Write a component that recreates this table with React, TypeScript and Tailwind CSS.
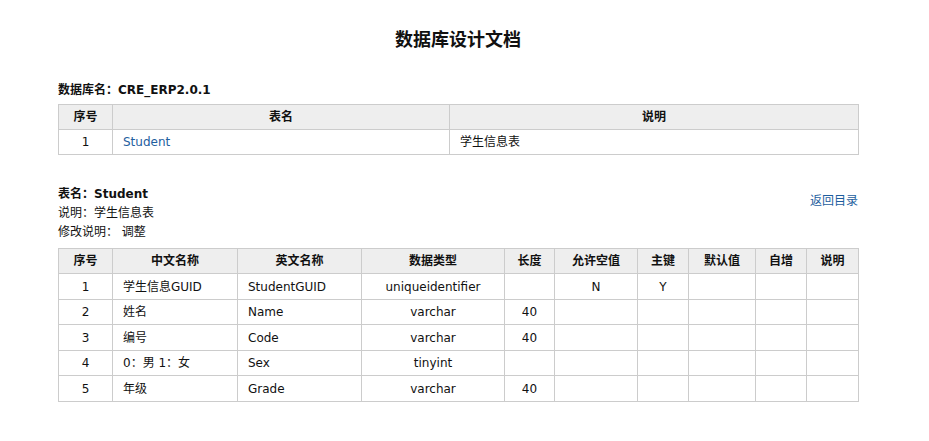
const font = "font-['Verdana','DejaVu_Sans','Noto_Sans_CJK_SC',sans-serif]";

type Column = { label: string; width: number; align: "center" | "left" };

const columns: Column[] = [
  { label: "序号", width: 54, align: "center" },
  { label: "中文名称", width: 125, align: "left" },
  { label: "英文名称", width: 124, align: "left" },
  { label: "数据类型", width: 143, align: "center" },
  { label: "长度", width: 50, align: "center" },
  { label: "允许空值", width: 83, align: "center" },
  { label: "主键", width: 51, align: "center" },
  { label: "默认值", width: 67, align: "center" },
  { label: "自增", width: 51, align: "center" },
  { label: "说明", width: 52, align: "center" },
];

const fields = [
  ["1", "学生信息GUID", "StudentGUID", "uniqueidentifier", "", "N", "Y", "", "", ""],
  ["2", "姓名", "Name", "varchar", "40", "", "", "", "", ""],
  ["3", "编号", "Code", "varchar", "40", "", "", "", "", ""],
  ["4", "0：男 1：女", "Sex", "tinyint", "", "", "", "", "", ""],
  ["5", "年级", "Grade", "varchar", "40", "", "", "", "", ""],
];

const th = "h-[25px] border border-[#cccccc] bg-[#eeeeee] font-bold text-center p-0";
const td = "h-[25px] border border-[#cccccc] px-[10px] py-0";

export default function App() {
  return (
    <div className={`w-[800px] ml-[58px] text-[12px] text-[#111111] ${font}`}>
      <h1 className="pt-[28px] text-center text-[18px] leading-[24px] font-bold">数据库设计文档</h1>

      <div className="mt-[30px] leading-[16px] font-bold">数据库名：CRE_ERP2.0.1</div>
      <table className="mt-[6px] w-[800px] table-fixed border-collapse">
        <colgroup>
          <col className="w-[54px]" />
          <col className="w-[337px]" />
          <col className="w-[409px]" />
        </colgroup>
        <thead>
          <tr>
            <th className={th}>序号</th>
            <th className={th}>表名</th>
            <th className={th}>说明</th>
          </tr>
        </thead>
        <tbody>
          <tr>
            <td className={`${td} text-center`}>1</td>
            <td className={td}>
              <a href="#student" className="text-[#1e5e9e]">Student</a>
            </td>
            <td className={td}>学生信息表</td>
          </tr>
        </tbody>
      </table>

      <div className="mt-[30px] flex items-start justify-between leading-[19px]">
        <div>
          <div className="font-bold">表名：Student</div>
          <div>说明：学生信息表</div>
          <div>修改说明： 调整</div>
        </div>
        <a href="#top" className="mt-[7px] text-[#1e5e9e]">返回目录</a>
      </div>

      <table className="mt-[6px] w-[800px] table-fixed border-collapse">
        <colgroup>
          {columns.map((c) => (
            <col key={c.label} style={{ width: c.width }} />
          ))}
        </colgroup>
        <thead>
          <tr>
            {columns.map((c) => (
              <th key={c.label} className={th}>{c.label}</th>
            ))}
          </tr>
        </thead>
        <tbody>
          {fields.map((row, i) => (
            <tr key={row[0]} className={i % 2 === 0 ? "h-[26px]" : "h-[25px]"}>
              {row.map((cell, j) => (
                <td
                  key={j}
                  className={`${td} ${columns[j].align === "center" ? "text-center" : "text-left"}`}
                >
                  {cell}
                </td>
              ))}
            </tr>
          ))}
        </tbody>
      </table>
    </div>
  );
}
